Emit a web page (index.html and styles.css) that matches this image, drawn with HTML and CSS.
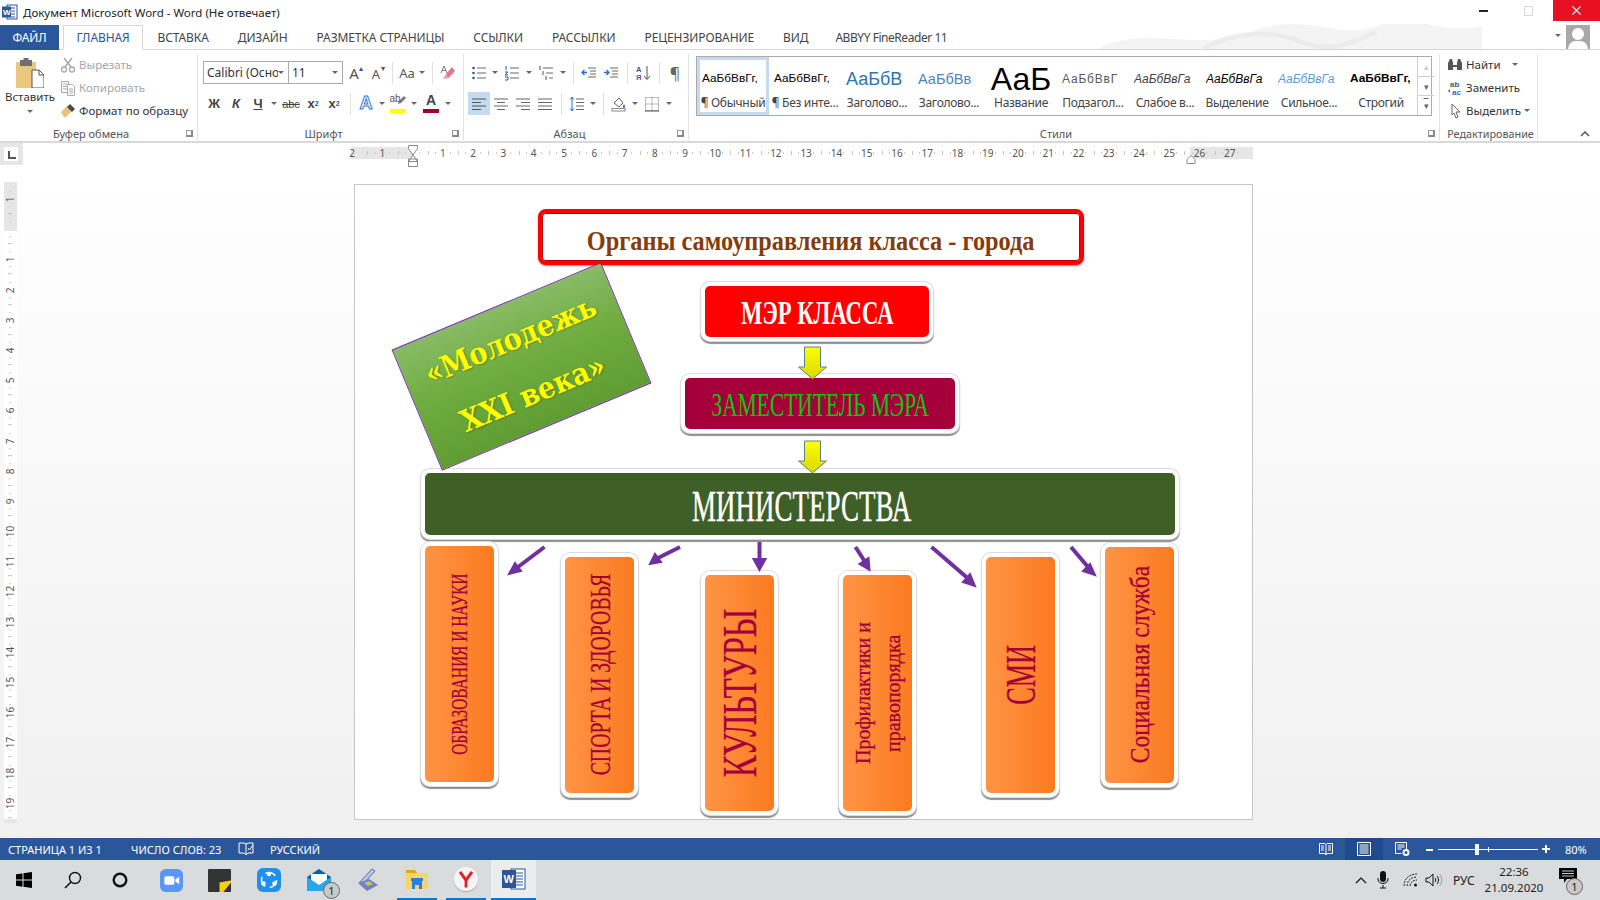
FILE: index.html
```html
<!DOCTYPE html>
<html lang="ru">
<head>
<meta charset="utf-8">
<title>Документ Microsoft Word - Word</title>
<link rel="stylesheet" href="styles.css">
</head>
<body>
<div class="window">
  <header class="titlebar">
    <svg class="app-icon" viewBox="0 0 16 16"><rect x="5" y="1" width="10" height="14" fill="#fff" stroke="#2b579a"/><path d="M8 4h5M8 7h5M8 10h5M8 13h5" stroke="#2b579a"/><rect x="0" y="2.500" width="9" height="11" fill="#2b579a"/><text x="1" y="11" class="app-w">W</text></svg>
    <span class="title-text">Документ Microsoft Word - Word (Не отвечает)</span>
    <div class="win-controls">
      <span class="win-min"></span>
      <span class="win-max"></span>
      <span class="win-close">
        <svg viewBox="0 0 12 12" class="win-x"><path d="M1.500 1.500l9 9M10.500 1.500l-9 9" stroke="#fff" stroke-width="1.300"/></svg>
      </span>
    </div>
  </header>

  <nav class="tabs">
    <a class="tab tab-file">ФАЙЛ</a>
    <a class="tab tab-active">ГЛАВНАЯ</a>
    <a class="tab">ВСТАВКА</a>
    <a class="tab">ДИЗАЙН</a>
    <a class="tab">РАЗМЕТКА СТРАНИЦЫ</a>
    <a class="tab">ССЫЛКИ</a>
    <a class="tab">РАССЫЛКИ</a>
    <a class="tab">РЕЦЕНЗИРОВАНИЕ</a>
    <a class="tab">ВИД</a>
    <a class="tab tab-abbyy">ABBYY FineReader 11</a>
    <svg class="tab-art" viewBox="0 0 420 26"><path d="M10 26C60 0 110 30 170 8s90 10 130-6 60 10 110 0v24z" fill="#f4f4f4"/><path d="M120 26c30-18 70-20 100-8s50 4 80-10" stroke="#ececec" stroke-width="5" fill="none"/></svg>
    <span class="account-caret caret"></span>
    <span class="avatar"><svg viewBox="0 0 24 26"><circle cx="12" cy="9" r="6" fill="#fff"/><path d="M2 26c0-8 4-10 10-10s10 2 10 10z" fill="#fff"/></svg></span>
  </nav>

  <section class="ribbon">
    <div class="group g-clip">
      <div class="g-body clip-body">
        <div class="paste">
          <svg class="paste-ico" viewBox="0 0 28 30"><rect x="0" y="4" width="20" height="26" fill="#eac77f"/><rect x="4" y="2" width="12" height="6" fill="#6f6f6f"/><rect x="7.500" y="0" width="5" height="4" fill="#6f6f6f"/><path d="M16 12h7l5 5v13H16z" fill="#fff" stroke="#555"/><path d="M23 12v5h5" fill="none" stroke="#555"/></svg>
          <span class="paste-label">Вставить</span>
          <span class="caret"></span>
        </div>
        <div class="clip-list">
          <div class="cmd cmd-off"><svg class="ico" viewBox="0 0 16 16"><path d="M4 1l7 9M12 1L5 10" stroke="#a9a9a9" stroke-width="1.500"/><circle cx="4" cy="12.500" r="2.500" fill="none" stroke="#a9a9a9" stroke-width="1.300"/><circle cx="12" cy="12.500" r="2.500" fill="none" stroke="#a9a9a9" stroke-width="1.300"/></svg>Вырезать</div>
          <div class="cmd cmd-off"><svg class="ico" viewBox="0 0 16 16"><path d="M1.500 1.500h7v11h-7zM3 4h4M3 6.500h4M3 9h4" fill="#fff" stroke="#a9a9a9"/><path d="M7.500 4.500h5l2 2v9h-7z" fill="#fff" stroke="#a9a9a9"/><path d="M9 9h4M9 11h4M9 13h4" stroke="#a9a9a9"/></svg>Копировать</div>
          <div class="cmd"><svg class="ico" viewBox="0 0 16 16"><path d="M1 9l6-6 5 5-6 6c-2 1-3-1-5-5z" fill="#e9c27c"/><path d="M7 4l3-3 5 5-3 3z" fill="#4a4a4a"/></svg>Формат по образцу</div>
        </div>
      </div>
      <div class="g-label"><span>Буфер обмена</span><i class="launch"></i></div>
    </div>

    <div class="group g-font">
      <div class="g-body rows">
        <div class="row">
          <div class="select sel-font"><span class="sel-text">Calibri (Осно</span><span class="caret"></span></div>
          <div class="select sel-size"><span class="sel-text">11</span><span class="caret"></span></div>
          <span class="b w22 glyph-a">A<i class="up">▴</i></span>
          <span class="b w22 glyph-a small-a">A<i class="up">▾</i></span>
          <span class="sep"></span>
          <span class="b w20 glyph-aa">Aa</span><span class="caret cw"></span>
          <span class="sep"></span>
          <span class="b w22"><svg class="ico" viewBox="0 0 16 16"><path d="M6 9l6-7 3 4-7 7.500z" fill="#e8748a"/><path d="M3 14l3-5 2 4.500z" fill="#e8a0b0"/><path d="M4 1L1 8M4 1l3 7M2 5.500h4" stroke="#7a7a7a" fill="none"/></svg></span>
        </div>
        <div class="row">
          <span class="b w22 fmt fmt-b">Ж</span>
          <span class="b w22 fmt fmt-i">К</span>
          <span class="b w22 fmt fmt-u">Ч</span><span class="caret cw"></span>
          <span class="b w24 fmt fmt-s">abc</span>
          <span class="b w20 fmt">x<sub class="blue-s">2</sub></span>
          <span class="b w22 fmt">x<sup class="blue-s">2</sup></span>
          <span class="sep"></span>
          <span class="b w22 fx-a">A</span><span class="caret cw"></span>
          <span class="b w22 col-btn"><em class="col-txt">ab</em><svg class="pen" viewBox="0 0 10 10"><path d="M1 9l1-3 5-5 2 2-5 5z" fill="#777"/></svg><i class="bar bar-y"></i></span><span class="caret cw"></span>
          <span class="b w24 col-btn"><em class="col-a">A</em><i class="bar bar-r"></i></span><span class="caret cw"></span>
        </div>
      </div>
      <div class="g-label"><span>Шрифт</span><i class="launch"></i></div>
    </div>

    <div class="group g-para">
      <div class="g-body rows">
        <div class="row">
          <span class="b w22"><svg class="ico" viewBox="0 0 16 16"><path d="M6 3h9M6 8h9M6 13h9" stroke="#666"/><circle cx="2.500" cy="3" r="1.300" fill="#2b579a"/><circle cx="2.500" cy="8" r="1.300" fill="#2b579a"/><circle cx="2.500" cy="13" r="1.300" fill="#2b579a"/></svg></span><span class="caret cw"></span>
          <span class="b w24"><svg class="ico" viewBox="0 0 16 16"><path d="M6 3h9M6 8h9M6 13h9" stroke="#666"/><path d="M2 1v4M1 7h3l-3 3h3M1 12h3v3H1" stroke="#2b579a" fill="none"/></svg></span><span class="caret cw"></span>
          <span class="b w24"><svg class="ico" viewBox="0 0 16 16"><path d="M5 3h10M8 8h7M11 13h4" stroke="#666"/><path d="M2 1v4M5 6v4M8 11v4" stroke="#2b579a"/></svg></span><span class="caret cw"></span>
          <span class="sep"></span>
          <span class="b w22"><svg class="ico" viewBox="0 0 16 16"><path d="M7 3h8M9 6h6M9 9h6M7 12h8" stroke="#666"/><path d="M6 7.500H1M3.500 5L1 7.500 3.500 10" stroke="#2b6cc4" stroke-width="1.300" fill="none"/></svg></span>
          <span class="b w22"><svg class="ico" viewBox="0 0 16 16"><path d="M7 3h8M9 6h6M9 9h6M7 12h8" stroke="#666"/><path d="M1 7.500h5M3.500 5L6 7.500 3.500 10" stroke="#2b6cc4" stroke-width="1.300" fill="none"/></svg></span>
          <span class="sep"></span>
          <span class="b w22"><svg class="ico" viewBox="0 0 16 16"><text x="1" y="7" class="sort-t sort-a">А</text><text x="1" y="15" class="sort-t sort-b">Я</text><path d="M12 1v13M9 11l3 3.500 3-3.500" stroke="#555" fill="none"/></svg></span>
          <span class="sep"></span>
          <span class="b w22 pilcrow">¶</span>
        </div>
        <div class="row">
          <span class="b w22 b-on"><svg class="ico" viewBox="0 0 16 16"><path d="M1 3h14M1 6.500h9M1 10h14M1 13.500h9" stroke="#555"/></svg></span>
          <span class="b w22"><svg class="ico" viewBox="0 0 16 16"><path d="M1 3h14M4 6.500h8M1 10h14M4 13.500h8" stroke="#666"/></svg></span>
          <span class="b w22"><svg class="ico" viewBox="0 0 16 16"><path d="M1 3h14M6 6.500h9M1 10h14M6 13.500h9" stroke="#666"/></svg></span>
          <span class="b w22"><svg class="ico" viewBox="0 0 16 16"><path d="M1 3h14M1 6.500h14M1 10h14M1 13.500h14" stroke="#666"/></svg></span>
          <span class="sep"></span>
          <span class="b w22"><svg class="ico" viewBox="0 0 16 16"><path d="M7 3h8M7 6.500h8M7 10h8M7 13.500h8" stroke="#666"/><path d="M3 1v14M1 3.500L3 1l2 2.500M1 12.500L3 15l2-2.500" stroke="#2b6cc4" fill="none"/></svg></span><span class="caret cw"></span>
          <span class="sep"></span>
          <span class="b w22"><svg class="ico" viewBox="0 0 16 16"><path d="M3 7l5-5 4 5-4 4z" fill="#fff" stroke="#666"/><path d="M13 8c1 2 2 3 0 4-2-1-1-2 0-4z" fill="#2b6cc4"/><rect x="1" y="12.500" width="13" height="2.500" fill="#fff" stroke="#888"/></svg></span><span class="caret cw"></span>
          <span class="b w24"><svg class="ico" viewBox="0 0 16 16"><path d="M1.500 1.500h13v13h-13zM8 1.500v13M1.500 8h13" fill="none" stroke="#777" stroke-dasharray="1 1"/><path d="M1 15h14" stroke="#555"/></svg></span><span class="caret cw"></span>
        </div>
      </div>
      <div class="g-label"><span>Абзац</span><i class="launch"></i></div>
    </div>

    <div class="group g-styles">
      <div class="gallery-wrap">
        <div class="gallery">
          <div class="style-item style-on"><div class="pv pv-body">АаБбВвГг,</div><div class="st-name">¶ Обычный</div></div>
          <div class="style-item"><div class="pv pv-body">АаБбВвГг,</div><div class="st-name">¶ Без инте...</div></div>
          <div class="style-item"><div class="pv pv-h1">АаБбВ</div><div class="st-name">Заголово...</div></div>
          <div class="style-item"><div class="pv pv-h2">АаБбВв</div><div class="st-name">Заголово...</div></div>
          <div class="style-item"><div class="pv pv-title">АаБ</div><div class="st-name">Название</div></div>
          <div class="style-item"><div class="pv pv-sub">АаБбВвГ</div><div class="st-name">Подзагол...</div></div>
          <div class="style-item"><div class="pv pv-em1">АаБбВвГа</div><div class="st-name">Слабое в...</div></div>
          <div class="style-item"><div class="pv pv-em2">АаБбВвГа</div><div class="st-name">Выделение</div></div>
          <div class="style-item"><div class="pv pv-em3">АаБбВвГа</div><div class="st-name">Сильное...</div></div>
          <div class="style-item"><div class="pv pv-strong">АаБбВвГг,</div><div class="st-name">Строгий</div></div>
        </div>
        <div class="gal-scroll">
          <span class="gal-btn gal-off">▴</span>
          <span class="gal-btn">▾</span>
          <span class="gal-btn gal-more">▾</span>
        </div>
      </div>
      <div class="g-label"><span>Стили</span><i class="launch"></i></div>
    </div>

    <div class="group g-edit">
      <div class="g-body edit-list">
        <div class="cmd"><svg class="ico" viewBox="0 0 16 16"><path d="M1 13V6l2-4h2l1 4v2h4V6l1-4h2l2 4v7h-5v-3H6v3z" fill="#555"/></svg>Найти<span class="caret edit-caret"></span></div>
        <div class="cmd"><svg class="ico" viewBox="0 0 16 16"><text x="3" y="7" class="rep-a">ab</text><text x="5" y="15" class="rep-b">ac</text><path d="M1 11l2-2v4z" fill="#2b6cc4"/></svg>Заменить</div>
        <div class="cmd"><svg class="ico" viewBox="0 0 16 16"><path d="M5 1l8 8H9l2 5-2 1-2-5-2 2z" fill="#fff" stroke="#666"/></svg>Выделить<span class="caret"></span></div>
      </div>
      <div class="g-label"><span>Редактирование</span></div>
    </div>
    <svg class="collapse" viewBox="0 0 10 6"><path d="M1 5l4-4 4 4" fill="none" stroke="#555" stroke-width="1.500"/></svg>
  </section>

  <div class="ruler-row">
    <div class="tab-sel"><span class="tab-sel-in"></span></div>
    <div class="h-ruler">
      <span class="n first">2</span><span class="n">1</span><span class="n"></span><span class="n">1</span><span class="n">2</span><span class="n">3</span><span class="n">4</span><span class="n">5</span><span class="n">6</span><span class="n">7</span><span class="n">8</span><span class="n">9</span><span class="n">10</span><span class="n">11</span><span class="n">12</span><span class="n">13</span><span class="n">14</span><span class="n">15</span><span class="n">16</span><span class="n">17</span><span class="n">18</span><span class="n">19</span><span class="n">20</span><span class="n">21</span><span class="n">22</span><span class="n">23</span><span class="n">24</span><span class="n">25</span><span class="n">26</span><span class="n">27</span>
      <svg class="indent-l" viewBox="0 0 10 22"><path d="M.5.500h9v3L5 10l4.500 6.500h-9L5 10 .5 3.500zM.5 14h9v7.500h-9z" fill="#fff" stroke="#8a8a8a"/></svg>
      <svg class="indent-r" viewBox="0 0 10 9"><path d="M5 .5l4 4v4H1v-4z" fill="#fff" stroke="#8a8a8a"/></svg>
    </div>
  </div>

  <main class="doc-area">
    <div class="v-ruler">
      <span class="vn">1</span><span class="vn"></span><span class="vn">1</span><span class="vn">2</span><span class="vn">3</span><span class="vn">4</span><span class="vn">5</span><span class="vn">6</span><span class="vn">7</span><span class="vn">8</span><span class="vn">9</span><span class="vn">10</span><span class="vn">11</span><span class="vn">12</span><span class="vn">13</span><span class="vn">14</span><span class="vn">15</span><span class="vn">16</span><span class="vn">17</span><span class="vn">18</span><span class="vn">19</span>
    </div>
    <article class="page">
      <div class="node head-box"><span class="head-text">Органы самоуправления класса - города</span></div>
      <div class="node metal mayor"><span class="mayor-text">МЭР КЛАССА</span></div>
      <div class="node metal deputy"><span class="deputy-text">ЗАМЕСТИТЕЛЬ МЭРА</span></div>
      <div class="node metal ministries"><span class="min-text">МИНИСТЕРСТВА</span></div>
      <div class="node youth"><span>«Молодежь</span><span>XXI века»</span></div>

      <div class="node metal col c1"><span class="vt t1">ОБРАЗОВАНИЯ И НАУКИ</span></div>
      <div class="node metal col c2"><span class="vt t2">СПОРТА И ЗДОРОВЬЯ</span></div>
      <div class="node metal col c3"><span class="vt t3">КУЛЬТУРЫ</span></div>
      <div class="node metal col c4"><span class="vt t4">Профилактики и<br>правопорядка</span></div>
      <div class="node metal col c5"><span class="vt t5">СМИ</span></div>
      <div class="node metal col c6"><span class="vt t6">Социальная служба</span></div>

      <svg class="arrows" viewBox="355 186 896 633">
        <defs>
          <linearGradient id="yg" x1="0" x2="0" y1="0" y2="1"><stop offset="0" stop-color="#ffff00"/><stop offset="1" stop-color="#d8d800"/></linearGradient>
        </defs>
        <path d="M804.500 348h16v20h6l-14 12-14-12h6z" fill="url(#yg)" stroke="#5a7f8f"/>
        <path d="M804.500 442h16v20h6l-14 12-14-12h6z" fill="url(#yg)" stroke="#5a7f8f"/>
        <g class="pa">
          <path d="M544.500 548L518 568"/><path d="M509 575l6-11 6 8z"/>
          <path d="M680 548l-22 11"/><path d="M650 565l5-10 6 8z"/>
          <path d="M759.500 543v20"/><path d="M759.500 571l-6-11h12z"/>
          <path d="M855.500 548l9 14"/><path d="M869.500 571l-10-6 9-6z"/>
          <path d="M931.500 548l36 31"/><path d="M975 587l-12-4 7-8z"/>
          <path d="M1071 548l17 20"/><path d="M1095 576l-12-4 7-7z"/>
        </g>
      </svg>
    </article>
  </main>

  <footer class="status">
    <span class="st st1">СТРАНИЦА 1 ИЗ 1</span>
    <span class="st st2">ЧИСЛО СЛОВ: 23</span>
    <svg class="st-proof" viewBox="0 0 16 16"><path d="M1 2h5l2 1 2-1h5v10h-5l-2 2-2-2H1zM8 3v11" fill="none" stroke="#fff"/><path d="M10 7l1.500 2L15 4" fill="none" stroke="#fff"/></svg>
    <span class="st st3">РУССКИЙ</span>
    <div class="st-right">
      <svg class="vw vw-read" viewBox="0 0 14 14"><path d="M.5 1.500h5.500l1 1 1-1h5.500v10H8l-1 1.500-1-1.500H.5zM7 2.500V13M2 4h3M2 6h3M2 8h3M9 4h3M9 6h3M9 8h3" fill="none" stroke="#fff"/></svg>
      <span class="vw-active"><svg class="vw vw-print" viewBox="0 0 14 14"><path d="M.5.500h13v13H.5zM2.500 3h9M2.500 5h9M2.500 7h9M2.500 9h9M2.500 11h9" fill="none" stroke="#fff"/></svg></span>
      <svg class="vw vw-web" viewBox="0 0 15 14"><path d="M.5.500h11v7M.5.500v11h6M2.500 3h7M2.500 5h7M2.500 7h4" fill="none" stroke="#fff"/><circle cx="11" cy="10.500" r="3.500" fill="#fff"/><circle cx="11" cy="10.500" r="1.500" fill="#2b579a"/></svg>
      <span class="zm zm-minus"></span>
      <div class="slider"><i class="thumb"></i><i class="mid"></i></div>
      <span class="zm zm-plus"></span>
      <span class="st zoom-val">80%</span>
    </div>
  </footer>

  <footer class="taskbar">
    <svg class="tb t-win" viewBox="0 0 16 16"><path d="M0 2.300l6.500-.9v6.200H0zM7.500 1.300L16 0v7.600H7.500zM0 8.500h6.500v6.200L0 13.800zM7.500 8.500H16V16l-8.500-1.200z" fill="#000"/></svg>
    <svg class="tb t-search" viewBox="0 0 18 18"><circle cx="11" cy="7" r="5.500" fill="none" stroke="#111" stroke-width="1.400"/><path d="M7 11l-6 6" stroke="#111" stroke-width="1.600"/></svg>
    <svg class="tb t-cort" viewBox="0 0 16 16"><circle cx="8" cy="8" r="6.300" fill="none" stroke="#111" stroke-width="2.400"/></svg>
    <svg class="tb t-zoom" viewBox="0 0 24 24"><rect width="24" height="24" rx="6" fill="#5b96f7"/><rect x="4.500" y="7.500" width="10.500" height="9" rx="2" fill="#fff"/><path d="M16 11l4-3v8l-4-3z" fill="#fff"/></svg>
    <svg class="tb t-sticky" viewBox="0 0 24 24"><rect width="24" height="24" rx="1" fill="#333"/><path d="M12 14l12-2v2l-8 10h-4z" fill="#f5d00f"/></svg>
    <svg class="tb t-share" viewBox="0 0 24 24"><rect width="24" height="24" rx="6" fill="#1e90f0"/><circle cx="12" cy="12" r="7.500" fill="none" stroke="#fff" stroke-width="1.500" stroke-dasharray="11 4.700"/><circle cx="12" cy="6" r="2.200" fill="#fff"/><circle cx="6.500" cy="15.500" r="2.200" fill="#fff"/><circle cx="17.500" cy="15.500" r="2.200" fill="#fff"/></svg>
    <span class="tb t-mail">
      <svg class="mail-ico" viewBox="0 0 24 24"><path d="M0 9L12 1l12 8v14H0z" fill="#0a5fb0"/><path d="M4 6h16v11H4z" fill="#fff"/><path d="M0 9l12 8 12-8v14H0z" fill="#28a8ea"/></svg>
      <i class="badge">1</i>
    </span>
    <svg class="tb t-scan" viewBox="0 0 24 24"><path d="M3 15L16 1l3 2L9 14z" fill="#b8c6e8" stroke="#5a70b0"/><path d="M2 15l11-4 9 6-11 6z" fill="#6f83c4"/><path d="M8 15l5-2 4 3-5 2z" fill="#c9c35a"/></svg>
    <span class="tb-run t-expl-run"><svg class="t-expl" viewBox="0 0 24 24"><path d="M1 3h9l2 3H1z" fill="#e0a527"/><rect x="1" y="6" width="22" height="16" fill="#f8d568"/><path d="M7 22v-8h10v8h-3v-4h-4v4z" fill="#2a82d4"/><rect x="6" y="11" width="12" height="3" fill="#2a82d4"/></svg></span>
    <span class="tb-run t-ya-run"><span class="ya"><svg viewBox="0 0 20 20"><path d="M5 4l5 7 5-7M10 11v6" fill="none" stroke="#e3202a" stroke-width="2.400"/></svg></span></span>
    <span class="tb-run t-word-run"><svg class="t-word" viewBox="0 0 24 24"><rect x="9" y="2" width="14" height="20" fill="#fff" stroke="#2b579a"/><path d="M12 6h9M12 9h9M12 12h9M12 15h9M12 18h9" stroke="#2b579a"/><rect x="0" y="3" width="14" height="18" fill="#2b579a"/><text x="1.500" y="16" class="word-w">W</text></svg></span>
    <div class="tray">
      <svg class="tr-caret" viewBox="0 0 12 7"><path d="M1 6l5-5 5 5" fill="none" stroke="#111" stroke-width="1.200"/></svg>
      <svg class="tr-mic" viewBox="0 0 12 18"><rect x="3" y="0" width="6" height="11" rx="3" fill="#111"/><path d="M1 7v1c0 6 10 6 10 0V7M6 14v3M3 17h6" fill="none" stroke="#111"/></svg>
      <svg class="tr-wifi" viewBox="0 0 16 14"><path d="M1 13C1 6 6 1 14 1M4 13c0-5 4-9 10-9M7 13c0-3 3-6 7-6" fill="none" stroke="#222" stroke-dasharray="2 1"/><circle cx="12.500" cy="12" r="1.500" fill="#111"/></svg>
      <svg class="tr-vol" viewBox="0 0 18 14"><path d="M1 5h3l4-4v12l-4-4H1z" fill="none" stroke="#111"/><path d="M10 5c1 1 1 3 0 4M12 3c2 2 2 6 0 8" fill="none" stroke="#111"/><path d="M14.500 1c3 3 3 9 0 12" fill="none" stroke="#999"/></svg>
      <span class="tr-lang">РУС</span>
      <div class="tr-clock"><span>22:36</span><span>21.09.2020</span></div>
      <span class="tr-note">
        <svg class="note-ico" viewBox="0 0 18 16"><path d="M0 0h18v11H8l-3 4v-4H0z" fill="#000"/><path d="M3 3h12M3 5.500h12M3 8h12" stroke="#fff" stroke-width=".8"/></svg>
        <i class="badge">1</i>
      </span>
    </div>
  </footer>
</div>
</body>
</html>
```

FILE: styles.css
```css
* { box-sizing: border-box; }
html, body { margin: 0; padding: 0; }
body { font-family: "Noto Sans", "Liberation Sans", sans-serif; font-size: 12px; color: #444; background: #fff; overflow: hidden; }
.window { width: 1600px; height: 900px; display: flex; flex-direction: column; overflow: hidden; background: #fff; }

/* title bar */
.titlebar { height: 24px; flex: none; display: flex; align-items: center; padding-left: 2px; position: relative; }
.app-icon { width: 16px; height: 18px; margin-right: 5px; }
.app-w { font: bold 8px "Liberation Sans", sans-serif; fill: #fff; }
.title-text { font-size: 11.500px; color: #222; white-space: nowrap; }
.win-controls { margin-left: auto; display: flex; align-items: flex-start; height: 24px; }
.win-min { width: 9px; height: 2px; background: #222; margin: 10px 36px 0 0; }
.win-max { width: 9px; height: 10px; border: 1px solid #d8d8d8; margin: 6px 20px 0 0; }
.win-close { width: 47px; height: 21px; background: #e81123; display: flex; align-items: center; justify-content: center; }
.win-x { width: 11px; height: 11px; }

/* tabs */
.tabs { height: 26px; flex: none; display: flex; align-items: stretch; border-bottom: 1px solid #d4d4d4; position: relative; padding-top: 1px; }
.tab { padding: 0 14.500px; display: flex; align-items: center; color: #444; font-size: 12px; white-space: nowrap; letter-spacing: -.1px; }
.tab-abbyy { letter-spacing: -.45px; margin-left: -2px; }
.tab-file { width: 59px; padding: 0; justify-content: center; background: #2b579a; color: #fff; margin-right: 4px; margin-bottom: -1px; }
.tab-active { width: 80px; justify-content: center; padding: 0; color: #2b579a; background: #fff; border: 1px solid #d4d4d4; border-bottom: 1px solid #fff; margin-bottom: -1px; }
.tab-art { position: absolute; right: 100px; top: 0; width: 420px; height: 25px; z-index: 0; }
.account-caret { position: absolute; left: 1555px; top: 10px; }
.avatar { position: absolute; left: 1566px; top: 1px; width: 24px; height: 24px; background: #a8a8a8; overflow: hidden; display: block; }
.avatar svg { display: block; width: 24px; height: 26px; }

/* ribbon */
.ribbon { height: 93px; flex: none; display: flex; border-bottom: 2px solid #d9d9d9; position: relative; }
.group { flex: none; display: flex; flex-direction: column; margin: 4px 0 1px; border-right: 1px solid #e1e1e1; }
.g-clip { width: 198px; }
.g-font { width: 266px; padding-left: 5px; }
.g-para { width: 225px; padding-left: 4px; }
.g-styles { width: 751px; padding-left: 7px; }
.g-edit { width: 98px; padding-left: 7px; }
.g-body { flex: 1; min-height: 0; }
.g-label { height: 13px; margin-top: auto; flex: none; display: flex; align-items: center; font-size: 11px; color: #555; }
.g-label span { flex: 1; text-align: center; white-space: nowrap; }
.g-clip .g-label span { padding-right: 4px; }
.g-font .g-label span { padding-right: 8px; }
.g-para .g-label span { padding-right: 6px; }
.g-styles .g-label span { padding-right: 12px; }
.g-edit .g-label span { margin-left: -3px; font-size: 10.800px; }
.launch { width: 7px; height: 7px; border-left: 1px solid #999; border-top: 1px solid #999; border-right: 2px solid #888; border-bottom: 2px solid #888; margin-right: 4px; flex: none; }

.clip-body { display: flex; }
.paste { width: 60px; display: flex; flex-direction: column; align-items: center; padding-top: 4px; }
.paste-ico { width: 28px; height: 30px; }
.paste-label { margin-top: 1px; color: #333; font-size: 11.500px; }
.paste .caret { margin-top: 6px; }
.clip-list, .edit-list { display: flex; flex-direction: column; margin-top: -1px; }
.cmd { height: 23px; flex: none; display: flex; align-items: center; gap: 3px; color: #333; font-size: 11.500px; white-space: nowrap; }
.cmd-off { color: #a6a6a6; }
.ico { width: 16px; height: 16px; flex: none; }
.caret { display: inline-block; width: 0; height: 0; border-left: 3px solid transparent; border-right: 3px solid transparent; border-top: 3px solid #666; flex: none; }
.cw { margin: 0 2px; }
.edit-caret { margin-left: 8px; }

.rows { display: flex; flex-direction: column; gap: 8px; padding-top: 7px; }
.row { height: 23px; flex: none; display: flex; align-items: center; }
.select { height: 23px; border: 1px solid #ababab; display: flex; align-items: center; font-size: 12px; color: #333; padding: 0 4px 0 3px; overflow: hidden; }
.sel-font { width: 85px; border-right: 0; }
.sel-size { width: 55px; }
.sel-text { flex: 1; white-space: nowrap; overflow: hidden; }
.b { height: 23px; display: flex; align-items: center; justify-content: center; flex: none; color: #444; position: relative; }
.w20 { width: 20px; } .w22 { width: 22px; } .w24 { width: 24px; }
.sep { width: 10px; height: 22px; flex: none; position: relative; }
.sep::before { content: ""; position: absolute; left: 5px; top: 0; bottom: 0; width: 1px; background: #e1e1e1; }
.glyph-a { font-size: 15px; color: #555; }
.small-a { font-size: 13px; padding-top: 2px; }
.up { font-style: normal; font-size: 8px; color: #2b579a; position: absolute; right: 2px; top: 1px; }
.glyph-aa { font-size: 13px; color: #555; }
.fmt { font: bold 13px "Liberation Sans", sans-serif; color: #444; }
.fmt-i { font-style: italic; }
.fmt-u { text-decoration: underline; }
.fmt-s { font-weight: normal; font-size: 11px; text-decoration: line-through; }
.blue-s { font-size: 7px; color: #2b579a; }
.fx-a { font: bold 18px "Liberation Sans", sans-serif; color: #fff; -webkit-text-stroke: 1px #2b7cd3; }
.col-btn { flex-direction: column; justify-content: flex-start; align-items: center; }
.col-txt { font: normal 10px "Liberation Sans", sans-serif; color: #555; height: 12px; padding-top: 1px; margin-left: -6px; }
.pen { position: absolute; right: 2px; top: 3px; width: 10px; height: 10px; }
.col-a { font: bold 14px "Liberation Sans", sans-serif; color: #444; height: 15px; }
.bar { width: 16px; height: 4px; display: block; }
.bar-y { background: #ffff00; margin-top: 5px; }
.bar-r { background: #a5002f; margin-top: 2px; }
.pilcrow { font-size: 16px; color: #666; }
.b-on { background: #c5d9f1; }
.sort-t { font: bold 7.500px "Liberation Sans", sans-serif; }
.sort-a { fill: #2b579a; }
.sort-b { fill: #7a3c9e; }
.rep-a { font: bold 8px "Liberation Sans", sans-serif; fill: #555; }
.rep-b { font: bold 8px "Liberation Sans", sans-serif; fill: #2b6cc4; }

.gallery-wrap { flex: none; margin: 2px 0 0; width: 736px; height: 60px; display: flex; border: 1px solid #ababab; }
.gallery { flex: 1; display: flex; }
.style-item { width: 72px; flex: none; display: flex; flex-direction: column; align-items: center; border: 3px solid transparent; overflow: hidden; }
.style-on { border-color: #c5d9f1; }
.pv { height: 36px; padding-top: 2px; width: 62px; flex: none; overflow: hidden; white-space: nowrap; display: flex; align-items: center; justify-content: flex-start; font-family: "Liberation Sans", sans-serif; font-size: 12px; line-height: 1; color: #000; }
.pv-h1 { font-size: 18px; color: #2e74b5; }
.pv-h2 { font-size: 14.500px; color: #4a86c5; }
.pv-title { font-size: 32px; font-weight: 300; justify-content: center; }
.pv-sub { font-size: 12px; color: #5a5a5a; letter-spacing: .8px; }
.pv-em1 { font-style: italic; color: #404040; }
.pv-em2 { font-style: italic; }
.pv-em3 { font-style: italic; color: #5b9bd5; }
.pv-strong { font-weight: bold; font-size: 11.800px; }
.pv-body { font-size: 11.800px; font-weight: 500; }
.st-name { font-size: 12px; color: #444; white-space: nowrap; letter-spacing: -.3px; margin-top: -2px; }
.gal-scroll { width: 17px; flex: none; display: flex; flex-direction: column; border-left: 1px solid #d0d0d0; }
.gal-btn { flex: 1; display: flex; align-items: center; justify-content: center; font-size: 9px; color: #666; border-bottom: 1px solid #d0d0d0; }
.gal-off { color: #c8c8c8; }
.gal-more { border-bottom: 0; text-decoration: overline; }
.collapse { width: 10px; height: 6px; position: absolute; left: 1580px; top: 81px; }

/* rulers */
.ruler-row { height: 23px; flex: none; display: flex; position: relative; }
.tab-sel { width: 23px; height: 22px; background: #e6e6e6; padding: 4px; }
.tab-sel-in { display: block; width: 14px; height: 14px; background: #fff; position: relative; }
.tab-sel-in::before { content: ""; position: absolute; left: 4px; top: 4px; width: 6px; height: 6px; border-left: 2px solid #555; border-bottom: 2px solid #555; }
.h-ruler { margin: 4px 0 0 328px; width: 902px; height: 12px; display: flex; position: relative; overflow: visible;
  background: linear-gradient(90deg, #e6e6e6 0 62px, #fff 62px 839px, #e6e6e6 839px); font-size: 10px; color: #555; }
.n { width: 30.280px; flex: none; text-align: center; line-height: 12px; white-space: nowrap;
  background: linear-gradient(#c4c4c4,#c4c4c4) 0 50% / 1px 4px no-repeat, linear-gradient(#ccc,#ccc) 25% 50% / 1px 2px no-repeat, linear-gradient(#ccc,#ccc) 75% 50% / 1px 2px no-repeat; }
.first { margin-left: -14px; background: none; }
.indent-l { position: absolute; left: 57px; top: -2px; width: 10px; height: 22px; }
.indent-r { position: absolute; left: 835px; top: 8px; width: 10px; height: 9px; }

/* document */
.doc-area { flex: 1; min-height: 0; display: flex; align-items: flex-start; background: linear-gradient(#fff, #f0f0f0); }
.v-ruler { margin: 16px 0 0 4px; width: 13px; height: 641px; padding-top: 2px; display: flex; flex-direction: column; flex: none; font-size: 10px; color: #555;
  background: linear-gradient(#e6e6e6 0 49px, #fff 49px 637px, #e6e6e6 637px); }
.vn { height: 30.200px; flex: none; writing-mode: vertical-rl; transform: rotate(180deg); text-align: center; line-height: 13px;
  background: linear-gradient(#c4c4c4,#c4c4c4) 50% 0 / 4px 1px no-repeat, linear-gradient(#ccc,#ccc) 50% 25% / 2px 1px no-repeat, linear-gradient(#ccc,#ccc) 50% 75% / 2px 1px no-repeat; }
.page { margin: 18px 0 0 337px; width: 899px; height: 636px; background: #fff; border: 1px solid #c6c6c6; position: relative; flex: none; }

.node { position: absolute; display: flex; align-items: center; justify-content: center; text-align: center; font-family: "Liberation Serif", serif; font-weight: bold; white-space: nowrap; }
.metal { border: 4px solid #fff; border-radius: 9px; box-shadow: 0 0 0 1px #dcdcdc, 0 2px 1px 1px #8f8f8f; }
.head-box { left: 183px; top: 24px; width: 546px; height: 56px; padding-top: 9px; border: 4px solid #f00; border-radius: 8px; box-shadow: inset 0 0 0 1px #b80000, 0 1px 2px #999; background: #fff; }
.head-text { font-size: 27px; color: #843c0c; transform: scaleX(.9); }
.mayor { left: 346px; top: 97px; width: 232px; height: 59px; padding-top: 3px; background: #f00; }
.mayor-text { font-size: 33px; color: #fff; transform: scaleX(.685); }
.deputy { left: 326px; top: 189px; width: 278px; height: 59px; padding-top: 3px; background: #a5003a; }
.deputy-text { font-size: 33px; font-weight: normal; color: #0fc40f; transform: scaleX(.65); }
.ministries { left: 66px; top: 284px; width: 758px; height: 70px; padding-top: 3px; background: #3f5f28; }
.min-text { font-size: 45px; font-weight: normal; color: #fff; margin-left: 4px; transform: scaleX(.6); -webkit-text-stroke: .4px #fff; }
.youth { left: 53px; top: 116px; width: 227px; height: 131px; transform: rotate(-22.7deg); flex-direction: column; gap: 26px;
  background: linear-gradient(#88bb66, #70ad40 45%, #5f9c32); border: 1px solid #7030a0; color: #ffff00; font-size: 30px; line-height: 32px; font-family: "DejaVu Serif", "Liberation Serif", serif; font-stretch: condensed; text-shadow: 1px 1px 2px rgba(80,80,0,.5); }

.col { width: 77px; height: 244px; background: linear-gradient(90deg, #ff9445, #fb7a20); }
.c1 { left: 66px; top: 357px; }
.c2 { left: 206px; top: 368px; }
.c3 { left: 346px; top: 386px; }
.c4 { left: 484px; top: 386px; }
.c5 { left: 627px; top: 368px; }
.c6 { left: 746px; top: 358px; }
.vt { writing-mode: vertical-rl; color: #a5003a; font-weight: normal; -webkit-text-stroke: .3px #a5003a; }
.t1 { font-size: 23px; transform: rotate(180deg) scaleY(.67); }
.t2 { font-size: 30px; transform: rotate(180deg) scaleY(.66); }
.t3 { font-size: 48px; transform: rotate(180deg) scaleY(.68); }
.t4 { font-size: 20px; line-height: 30px; transform: rotate(180deg); }
.t5 { font-size: 43px; transform: rotate(180deg) scaleY(.61); }
.t6 { font-size: 28px; transform: rotate(180deg) scaleY(.84); }

.arrows { position: absolute; left: 0; top: 0; width: 896px; height: 633px; pointer-events: none; }
.pa path { fill: #7030a0; stroke: #7030a0; stroke-width: 4px; }
.pa path:nth-child(even) { stroke-width: 2px; }

/* status bar */
.status { height: 22px; flex: none; background: #2b579a; display: flex; align-items: center; color: #fff; }
.st { font-size: 11px; color: #fff; white-space: nowrap; }
.st1 { margin-left: 8px; width: 123px; }
.st2 { width: 107px; }
.st-proof { width: 16px; height: 16px; margin-right: 16px; }
.st-right { margin-left: auto; display: flex; align-items: center; height: 22px; }
.vw { width: 14px; height: 14px; display: block; }
.vw-active { width: 38px; height: 22px; background: #1f4b8e; display: flex; align-items: center; justify-content: center; margin: 0 12px; }
.vw-web { width: 15px; margin-right: 16px; }
.zm { position: relative; width: 7px; height: 7px; margin-right: 3px; }
.zm::before { content: ""; position: absolute; left: 0; right: 0; top: 3px; height: 2px; background: #fff; }
.zm-plus::after { content: ""; position: absolute; top: 0; bottom: 0; left: 3px; width: 2px; background: #fff; }
.zm-plus { width: 8px; height: 8px; margin: 0 15px 0 4px; }
.slider { width: 100px; height: 1px; background: #fff; position: relative; margin-left: 2px; }
.thumb { position: absolute; left: 37px; top: -5px; width: 4px; height: 11px; background: #fff; }
.mid { position: absolute; left: 50px; top: -2px; width: 1px; height: 5px; background: #fff; }
.zoom-val { width: 35px; }

/* taskbar */
.taskbar { height: 40px; flex: none; background: #dadbdc; display: flex; align-items: center; position: relative; }
.tb { flex: none; display: block; }
.t-win { width: 16px; height: 16px; margin-left: 16px; }
.t-search { width: 18px; height: 18px; margin-left: 32px; }
.t-cort { width: 16px; height: 16px; margin-left: 30px; }
.t-zoom { width: 23px; height: 23px; margin-left: 32px; }
.t-sticky { width: 23px; height: 23px; margin-left: 25px; }
.t-share { width: 24px; height: 24px; margin-left: 26px; }
.t-mail { width: 24px; height: 24px; margin-left: 26px; position: relative; }
.mail-ico { width: 24px; height: 24px; display: block; }
.badge { position: absolute; right: -9px; bottom: -7px; width: 17px; height: 17px; border-radius: 50%; border: 1px solid #666; background: #c9c9c9; color: #222; font: normal 11px/15px "Noto Sans", sans-serif; text-align: center; }
.t-scan { width: 24px; height: 24px; margin-left: 25px; }
.tb-run { height: 40px; flex: none; display: flex; align-items: center; justify-content: center; border-bottom: 2px solid #0078d7; }
.t-expl-run { width: 40px; margin-left: 17px; }
.t-expl { width: 24px; height: 24px; }
.t-ya-run { width: 40px; margin-left: 9px; }
.ya { width: 24px; height: 24px; border-radius: 50%; background: #f4f4f4; box-shadow: 0 1px 1px #aaa; display: block; }
.ya svg { display: block; width: 24px; height: 24px; }
.t-word-run { width: 45px; margin-left: 5px; background: #ececec; }
.t-word { width: 24px; height: 24px; }
.word-w { font: bold 11px "Liberation Sans", sans-serif; fill: #fff; }
.tray { margin-left: auto; display: flex; align-items: center; height: 40px; color: #222; }
.tr-caret { width: 12px; height: 7px; margin-right: 10px; }
.tr-mic { width: 12px; height: 18px; margin-right: 14px; }
.tr-wifi { width: 16px; height: 14px; margin-right: 6px; }
.tr-vol { width: 18px; height: 14px; margin-right: 10px; }
.tr-lang { font-size: 12px; width: 28px; }
.tr-clock { width: 66px; display: flex; flex-direction: column; align-items: center; font-size: 11.500px; line-height: 16px; margin-right: 8px; }
.tr-note { width: 32px; height: 24px; position: relative; margin-right: 13px; }
.note-ico { width: 18px; height: 16px; display: block; margin: 0 0 0 4px; }
.tr-note .badge { right: 4px; bottom: -3px; }
```
